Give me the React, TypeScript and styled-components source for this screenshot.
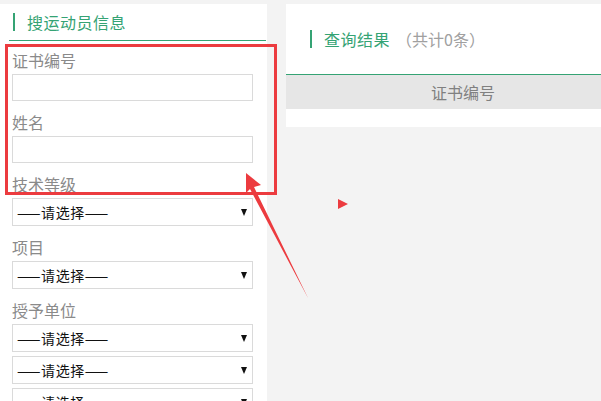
import React from 'react'
import styled, { createGlobalStyle } from 'styled-components'

const GlobalStyle = createGlobalStyle`
  html, body {
    margin: 0;
    padding: 0;
    background: #f3f3f3;
    font-family: "Noto Sans CJK SC", "Noto Sans", sans-serif;
    overflow: hidden;
  }
`

const green = '#35a374'

const Page = styled.div`
  position: relative;
  display: flex;
  align-items: flex-start;
  gap: 19px;
  padding-top: 4px;
  width: 601px;
  height: 401px;
  box-sizing: border-box;
  overflow: hidden;
`

const SidePanel = styled.div`
  width: 267px;
  height: 420px;
  background: #fff;
  flex-shrink: 0;
`

const SideHeader = styled.div`
  display: flex;
  align-items: center;
  height: 36px;
  margin: 0 1px 0 9px;
  padding-left: 4px;
  border-bottom: 1px solid ${green};
`

const Bar = styled.span`
  width: 2px;
  height: 18px;
  background: ${green};
  margin-right: 12px;
`

const Title = styled.span`
  color: ${green};
  font-size: 16px;
  letter-spacing: 0.5px;
`

const Count = styled.span`
  color: #a0a0a0;
  font-size: 16px;
  margin-left: 6px;
`

const Form = styled.div`
  display: flex;
  flex-direction: column;
  padding: 8px 0 0 12px;
`

const Label = styled.div<{ $first?: boolean }>`
  color: #8a8a8a;
  font-size: 16px;
  line-height: 22px;
  margin: ${(p) => (p.$first ? '0' : '6px')} 0 3px;
`

const Input = styled.div`
  width: 241px;
  height: 27px;
  box-sizing: border-box;
  border: 1px solid #dadada;
  margin-bottom: 4px;
`

const Select = styled.div`
  display: flex;
  align-items: center;
  justify-content: space-between;
  width: 241px;
  height: 28px;
  box-sizing: border-box;
  border: 1px solid #dadada;
  padding: 0 5px 0 4px;
  margin-bottom: 4px;
  font-size: 14px;
  letter-spacing: 0.6px;
  color: #111;
`

const Caret = styled.span`
  width: 0;
  height: 0;
  border-left: 3px solid transparent;
  border-right: 3px solid transparent;
  border-top: 7px solid #111;
`

const MainPanel = styled.div`
  flex: 1;
  height: 123px;
  background: #fff;
  position: relative;
`

const MainHeader = styled.div`
  display: flex;
  align-items: center;
  height: 70px;
  padding-left: 24px;
  border-bottom: 1px solid ${green};
`

const TableHead = styled.div`
  display: flex;
  height: 34px;
  background: #e6e6e6;
`

const HeadCell = styled.div`
  width: 354px;
  display: flex;
  align-items: center;
  justify-content: center;
  color: #808080;
  font-size: 16px;
`

const EdgeMark = styled.div`
  position: absolute;
  right: 0;
  top: 4px;
  width: 3px;
  height: 26px;
  background: repeating-linear-gradient(#3b82e6 0 10px, transparent 10px 11px, #3b82e6 11px 14px, transparent 14px 15px);
`

const Highlight = styled.div`
  position: absolute;
  left: 5px;
  top: 44px;
  width: 272px;
  height: 151px;
  box-sizing: border-box;
  border: 3px solid #ec3b3f;
  pointer-events: none;
`

const Overlay = styled.svg`
  position: absolute;
  left: 0;
  top: 0;
  pointer-events: none;
`

export default function App() {
  return (
    <>
      <GlobalStyle />
      <Page>
        <SidePanel>
          <SideHeader>
            <Bar />
            <Title>搜运动员信息</Title>
          </SideHeader>
          <Form>
            <Label $first>证书编号</Label>
            <Input />
            <Label>姓名</Label>
            <Input />
            <Label>技术等级</Label>
            <Select>——请选择——<Caret /></Select>
            <Label>项目</Label>
            <Select>——请选择——<Caret /></Select>
            <Label>授予单位</Label>
            <Select>——请选择——<Caret /></Select>
            <Select>——请选择——<Caret /></Select>
            <Select>——请选择——<Caret /></Select>
          </Form>
        </SidePanel>
        <MainPanel>
          <MainHeader>
            <Bar />
            <Title>查询结果</Title>
            <Count>（共计0条）</Count>
          </MainHeader>
          <TableHead>
            <HeadCell>证书编号</HeadCell>
          </TableHead>
          <EdgeMark />
        </MainPanel>
        <Highlight />
        <Overlay width="601" height="401">
          <polygon points="246,173 261,185 254,187 308,298 250,189 246,193" fill="#ec3b3f" />
          <polygon points="338,199 348,204 338,209" fill="#ec3b3f" />
        </Overlay>
      </Page>
    </>
  )
}
